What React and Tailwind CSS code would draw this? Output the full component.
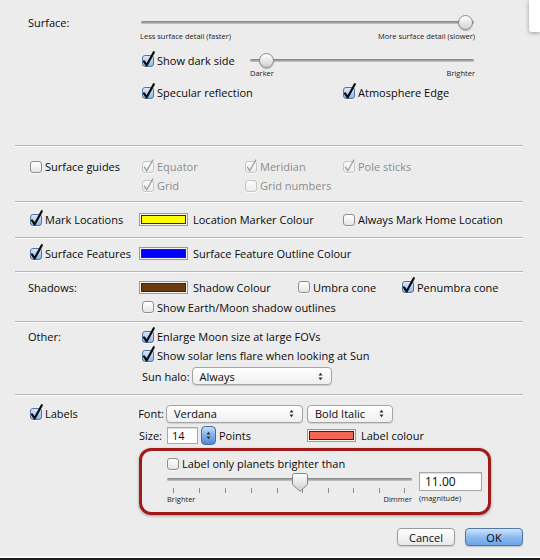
import React from "react";

function Box({ checked = false, disabled = false }) {
  const frame = disabled
    ? "border-[#c6c6c6] bg-linear-to-b from-[#fbfbfb] to-[#ececec]"
    : checked
    ? "border-[#55739c] bg-linear-to-b from-[#dbe9fb] to-[#8db6ea]"
    : "border-[#8e8e8e] bg-linear-to-b from-white to-[#e6e6e6]";
  return (
    <span
      className={`relative inline-block w-[12px] h-[12px] shrink-0 rounded-[3px] border shadow-[0_1px_0_rgba(255,255,255,0.8)] ${frame}`}
    >
      {checked && !disabled && (
        <svg className="absolute left-[-1px] top-[-1px] w-[12px] h-[12px] overflow-visible" viewBox="0 0 12 12">
          <path d="M2 6.4 L4.7 10.3 L11.8 -2.8" fill="none" stroke="#0b0b0b" strokeWidth="2.2" strokeLinecap="round" strokeLinejoin="round" />
        </svg>
      )}
      {checked && disabled && (
        <svg className="absolute left-[-1px] top-[-1px] w-[12px] h-[12px] overflow-visible" viewBox="0 0 12 12">
          <path d="M2.4 6.2 L4.8 9.8 L10.8 -1" fill="none" stroke="#9c9c9c" strokeWidth="1.3" strokeLinecap="round" strokeLinejoin="round" />
        </svg>
      )}
    </span>
  );
}

function Check({ label, checked, disabled, className = "" }) {
  return (
    <label className={`flex items-center gap-[3px] ${className}`}>
      <Box checked={checked} disabled={disabled} />
      <span className={disabled ? "text-[#8c8c8c]" : "text-[#0a0a0a]"}>{label}</span>
    </label>
  );
}

function Swatch({ color, className = "" }) {
  return (
    <span
      className={`inline-block w-[49px] h-[13px] shrink-0 border border-[#9a9a9a] p-px bg-[#f4f4f4] ${className}`}
    >
      <span className="block w-full h-full border border-[#2a2a2a]" style={{ background: color }} />
    </span>
  );
}

function UpDown({ className = "" }) {
  return (
    <svg className={`w-[5px] h-[9px] ${className}`} viewBox="0 0 5 9">
      <path d="M0.5 3.5 L2.5 0.8 L4.5 3.5 Z" fill="#333" />
      <path d="M0.5 5.5 L2.5 8.2 L4.5 5.5 Z" fill="#333" />
    </svg>
  );
}

function Select({ value, className = "" }) {
  return (
    <div
      className={`flex items-center justify-between h-[18px] pl-[7px] pr-[8px] rounded-[4px] border border-[#a4a4a4] bg-linear-to-b from-white to-[#efefef] shadow-[0_1px_1px_rgba(0,0,0,0.12)] text-[#0a0a0a] ${className}`}
    >
      <span>{value}</span>
      <UpDown />
    </div>
  );
}

function RoundSlider({ width, knob }) {
  return (
    <div className="relative h-[15px]" style={{ width }}>
      <div className="absolute left-0 right-0 top-[6px] h-[3px] rounded-full bg-linear-to-b from-[#7e7e7e] to-[#c9c9c9]" />
      <div
        className="absolute top-0 w-[15px] h-[15px] rounded-full border border-[#8a8a8a] bg-linear-to-b from-white to-[#d2d2d2] shadow-[0_1px_1px_rgba(0,0,0,0.25)]"
        style={{ left: knob }}
      />
    </div>
  );
}

function Divider() {
  return <div className="h-[2px] border-t border-[#b5b5b5] border-b border-b-[#fafafa]" />;
}

function Row({ left, children, h = "h-[19px]" }) {
  return (
    <div className={`flex items-center ${h}`}>
      <div className="w-[114px] shrink-0 flex items-center">{left}</div>
      <div className="flex items-center">{children}</div>
    </div>
  );
}

const ticks = [6, 32, 58, 84, 110, 135, 161, 186, 212, 237];

export default function App() {
  return (
    <div className="relative w-[540px] h-[560px] overflow-hidden bg-[#ececec] font-['Open_Sans',sans-serif] font-medium text-[11px] leading-none text-[#0a0a0a] flex flex-col">
      {/* corner of the window lying behind */}
      <div className="absolute right-0 top-0 w-[11px] h-[32px] bg-white rounded-bl-[3px] shadow-[0_1px_4px_rgba(0,0,0,0.35)]" />

      <div className="flex-1 ml-[15px] w-[508px]">
        {/* Surface */}
        <div className="pl-[13px] pt-[15px] h-[145px]">
          <Row left={<span>Surface:</span>} h="h-[15px]">
            <div className="-ml-[1px]">
              <RoundSlider width={333} knob={317} />
            </div>
          </Row>
          <div className="mt-[2px] h-[10px] flex items-center">
            <div className="w-[114px]" />
            <div className="-ml-[2px] w-[335px] flex justify-between text-[7.5px] text-[#222]">
              <span>Less surface detail (faster)</span>
              <span>More surface detail (slower)</span>
            </div>
          </div>
          <div className="mt-[11px]">
            <Row h="h-[15px]">
              <div className="w-[108px]">
                <Check label="Show dark side" checked />
              </div>
              <RoundSlider width={224} knob={9} />
            </Row>
          </div>
          <div className="mt-[1px] h-[10px] flex items-center">
            <div className="w-[222px]" />
            <div className="w-[225px] flex justify-between text-[7.5px] text-[#222]">
              <span>Darker</span>
              <span>Brighter</span>
            </div>
          </div>
          <div className="mt-[6px]">
            <Row h="h-[15px]">
              <div className="w-[201px]">
                <Check label="Specular reflection" checked />
              </div>
              <Check label="Atmosphere Edge" checked />
            </Row>
          </div>
        </div>

        <Divider />

        {/* Surface guides */}
        <div className="pl-[13px] pt-[10px] pb-[6px]">
          <Row left={<Check label="Surface guides" className="ml-[2px]" />}>
            <div className="w-[103px]"><Check label="Equator" checked disabled /></div>
            <div className="w-[98px]"><Check label="Meridian" checked disabled /></div>
            <Check label="Pole sticks" checked disabled />
          </Row>
          <Row>
            <div className="w-[103px]"><Check label="Grid" checked disabled /></div>
            <Check label="Grid numbers" disabled />
          </Row>
        </div>

        <Divider />

        {/* Locations */}
        <div className="pl-[13px] pt-[7px] pb-[8px]">
          <Row left={<Check label="Mark Locations" checked className="ml-[2px]" />}>
            <div className="w-[201px] flex items-center">
              <Swatch color="#ffff00" className="-ml-[3px]" />
              <span className="ml-[5px]">Location Marker Colour</span>
            </div>
            <Check label="Always Mark Home Location" />
          </Row>
        </div>

        <Divider />

        {/* Surface features */}
        <div className="pl-[13px] pt-[5px] pb-[8px]">
          <Row left={<Check label="Surface Features" checked className="ml-[2px]" />}>
            <Swatch color="#0000ff" className="-ml-[3px]" />
            <span className="ml-[5px]">Surface Feature Outline Colour</span>
          </Row>
        </div>

        <Divider />

        {/* Shadows */}
        <div className="pl-[13px] pt-[4px] pb-[4px]">
          <Row left={<span>Shadows:</span>} h="h-[20px]">
            <div className="w-[156px] flex items-center">
              <Swatch color="#6a3a10" className="-ml-[3px]" />
              <span className="ml-[5px]">Shadow Colour</span>
            </div>
            <div className="w-[104px]"><Check label="Umbra cone" /></div>
            <Check label="Penumbra cone" checked />
          </Row>
          <Row h="h-[20px]">
            <Check label="Show Earth/Moon shadow outlines" />
          </Row>
        </div>

        <Divider />

        {/* Other */}
        <div className="pl-[13px] pt-[4px] pb-[7px]">
          <Row left={<span>Other:</span>}>
            <Check label="Enlarge Moon size at large FOVs" checked />
          </Row>
          <Row>
            <Check label="Show solar lens flare when looking at Sun" checked />
          </Row>
          <Row h="h-[22px]">
            <span>Sun halo:</span>
            <Select value="Always" className="ml-[2px] w-[140px]" />
          </Row>
        </div>

        <Divider />

        {/* Labels */}
        <div className="pl-[13px] pt-[8px]">
          <Row left={<Check label="Labels" checked className="ml-[2px]" />}>
            <span className="-ml-[7px] w-[29px] text-right">Font:</span>
            <Select value="Verdana" className="ml-[2px] w-[137px]" />
            <Select value="Bold Italic" className="ml-[4px] w-[86px]" />
          </Row>
          <div className="mt-[2px]">
            <Row h="h-[21px]">
              <div className="-ml-[7px] w-[172px] flex items-center">
                <span className="w-[27px] text-right">Size:</span>
                <div className="ml-[5px] w-[31px] h-[17px] border border-[#a8a8a8] bg-white pl-[4px] flex items-center shadow-[inset_0_1px_1px_rgba(0,0,0,0.15)]">
                  14
                </div>
                <div className="ml-[3px] w-[15px] h-[19px] rounded-[4px] border border-[#4d6e9c] bg-linear-to-b from-[#c4dcf8] via-[#7fb0ec] to-[#4f8ad6] flex items-center justify-center">
                  <UpDown />
                </div>
                <span className="ml-[3px]">Points</span>
              </div>
              <Swatch color="#f26652" />
              <span className="ml-[5px]">Label colour</span>
            </Row>
          </div>

          {/* magnitude limit */}
          <div className="ml-[111px] mt-[2px] w-[352px] h-[67px] rounded-[12px] border-[3px] border-[#a11a1a] shadow-[0_1px_3px_rgba(0,0,0,0.35)] pl-[25px] pr-[6px] pt-[5px]">
            <Check label="Label only planets brighter than" className="h-[15px]" />
            <div className="mt-[1px] flex">
              <div className="w-[245px]">
                <div className="relative h-[22px]">
                  <div className="absolute left-0 right-0 top-[6px] h-[3px] rounded-full bg-linear-to-b from-[#7e7e7e] to-[#c9c9c9]" />
                  {ticks.map((t) => (
                    <div key={t} className="absolute top-[16px] w-px h-[5px] bg-[#8a8a8a]" style={{ left: t }} />
                  ))}
                  <svg className="absolute top-[1px] left-[125px] w-[16px] h-[19px]" viewBox="0 0 16 19">
                    <defs>
                      <linearGradient id="knobFill" x1="0" y1="0" x2="0" y2="1">
                        <stop offset="0" stopColor="#ffffff" />
                        <stop offset="1" stopColor="#cfcfcf" />
                      </linearGradient>
                    </defs>
                    <path d="M2.5 0.5 H13.5 Q15.5 0.5 15.5 2.5 V11.5 L8 18.3 L0.5 11.5 V2.5 Q0.5 0.5 2.5 0.5 Z" fill="url(#knobFill)" stroke="#868686" />
                  </svg>
                </div>
                <div className="mt-[1px] h-[9px] flex items-center justify-between text-[7.5px] text-[#222]">
                  <span>Brighter</span>
                  <span>Dimmer</span>
                </div>
              </div>
              <div className="ml-[7px] flex flex-col">
                <div className="w-[63px] h-[19px] border border-[#a8a8a8] bg-white pl-[5px] flex items-center text-[12px] shadow-[inset_0_1px_1px_rgba(0,0,0,0.15)]">
                  11.00
                </div>
                <div className="mt-[3px] h-[9px] flex items-center text-[7.5px] text-[#222]">(magnitude)</div>
              </div>
            </div>
          </div>

          <div className="mt-[13px] flex justify-end gap-[10px]">
            <div className="w-[58px] h-[18px] rounded-[4px] border border-[#9a9a9a] bg-linear-to-b from-white to-[#e9e9e9] shadow-[0_1px_1px_rgba(0,0,0,0.15)] flex items-center justify-center">
              Cancel
            </div>
            <div className="w-[58px] h-[18px] rounded-[4px] border border-[#5377a8] bg-linear-to-b from-[#cfe3fa] via-[#8ebcf0] to-[#6aa4e8] shadow-[0_1px_1px_rgba(0,0,0,0.2)] flex items-center justify-center">
              OK
            </div>
          </div>
        </div>
      </div>

      <div className="h-[2px] bg-[#fafafa]" />
      <div className="h-[2px] bg-[#1e1e1e]" />
    </div>
  );
}
